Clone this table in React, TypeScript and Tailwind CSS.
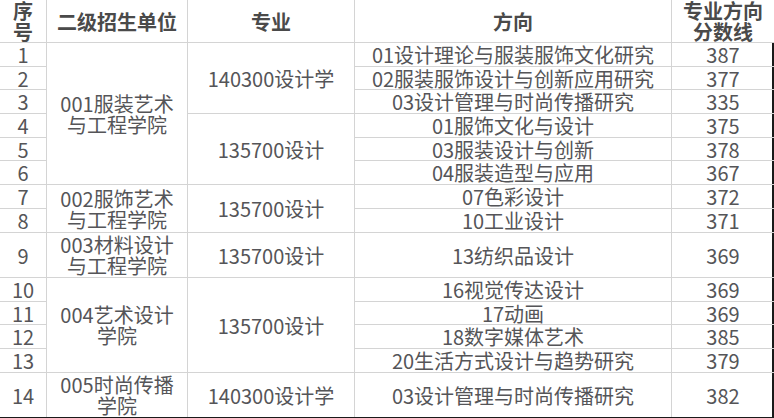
import React from "react";

type Cell = { text: string; cls: string };

const font = { fontFamily: '"Noto Sans CJK SC", "Noto Sans", sans-serif' };

const headers: Cell[] = [
  { text: "序\n号", cls: "col-start-1 row-start-1" },
  { text: "二级招生单位", cls: "col-start-2 row-start-1" },
  { text: "专业", cls: "col-start-3 row-start-1" },
  { text: "方向", cls: "col-start-4 row-start-1" },
  { text: "专业方向\n分数线", cls: "col-start-5 row-start-1" },
];

// 二级招生单位（合并单元格）
const units: Cell[] = [
  { text: "001服装艺术\n与工程学院", cls: "col-start-2 row-start-2 row-span-6" },
  { text: "002服饰艺术\n与工程学院", cls: "col-start-2 row-start-8 row-span-2" },
  { text: "003材料设计\n与工程学院", cls: "col-start-2 row-start-10" },
  { text: "004艺术设计\n学院", cls: "col-start-2 row-start-11 row-span-4" },
  { text: "005时尚传播\n学院", cls: "col-start-2 row-start-15" },
];

// 专业（合并单元格）
const majors: Cell[] = [
  { text: "140300设计学", cls: "col-start-3 row-start-2 row-span-3" },
  { text: "135700设计", cls: "col-start-3 row-start-5 row-span-3" },
  { text: "135700设计", cls: "col-start-3 row-start-8 row-span-2" },
  { text: "135700设计", cls: "col-start-3 row-start-10" },
  { text: "135700设计", cls: "col-start-3 row-start-11 row-span-4" },
  { text: "140300设计学", cls: "col-start-3 row-start-15" },
];

const rows: { dir: string; score: string; row: string }[] = [
  { dir: "01设计理论与服装服饰文化研究", score: "387", row: "row-start-2" },
  { dir: "02服装服饰设计与创新应用研究", score: "377", row: "row-start-3" },
  { dir: "03设计管理与时尚传播研究", score: "335", row: "row-start-4" },
  { dir: "01服饰文化与设计", score: "375", row: "row-start-5" },
  { dir: "03服装设计与创新", score: "378", row: "row-start-6" },
  { dir: "04服装造型与应用", score: "367", row: "row-start-7" },
  { dir: "07色彩设计", score: "372", row: "row-start-8" },
  { dir: "10工业设计", score: "371", row: "row-start-9" },
  { dir: "13纺织品设计", score: "369", row: "row-start-10" },
  { dir: "16视觉传达设计", score: "369", row: "row-start-11" },
  { dir: "17动画", score: "369", row: "row-start-12" },
  { dir: "18数字媒体艺术", score: "385", row: "row-start-13" },
  { dir: "20生活方式设计与趋势研究", score: "379", row: "row-start-14" },
  { dir: "03设计管理与时尚传播研究", score: "382", row: "row-start-15" },
];

function Td({ text, cls, bold }: { text: string; cls: string; bold?: boolean }) {
  return (
    <div
      className={`${cls} flex items-center justify-center whitespace-pre-line bg-white text-center leading-[21px] ${
        bold ? "font-bold text-[#4a4a4a]" : "text-[#555558]"
      }`}
    >
      {text}
    </div>
  );
}

export default function App() {
  return (
    <div className="h-[418px] w-[774px] overflow-hidden bg-white text-[20px]" style={font}>
      <div className="grid grid-cols-[46px_140px_166px_316px_102px] grid-rows-[42px_23px_22px_23px_23px_22px_23px_23px_23px_44px_23px_22px_23px_23px_44px] gap-px border-b border-[#1a1a1a] bg-[#d4d4d4]">
        {headers.map((h) => (
          <Td key={h.text} text={h.text} cls={h.cls} bold />
        ))}
        {rows.map((r, i) => (
          <Td key={"n" + i} text={String(i + 1)} cls={`col-start-1 ${r.row}`} />
        ))}
        {units.map((u) => (
          <Td key={u.text} text={u.text} cls={u.cls} />
        ))}
        {majors.map((m) => (
          <Td key={m.cls} text={m.text} cls={m.cls} />
        ))}
        {rows.map((r, i) => (
          <Td key={"d" + i} text={r.dir} cls={`col-start-4 ${r.row}`} />
        ))}
        {rows.map((r, i) => (
          <Td key={"s" + i} text={r.score} cls={`col-start-5 ${r.row} border-r-2 border-[#1a1a1a] pl-[2px]`} />
        ))}
      </div>
    </div>
  );
}
